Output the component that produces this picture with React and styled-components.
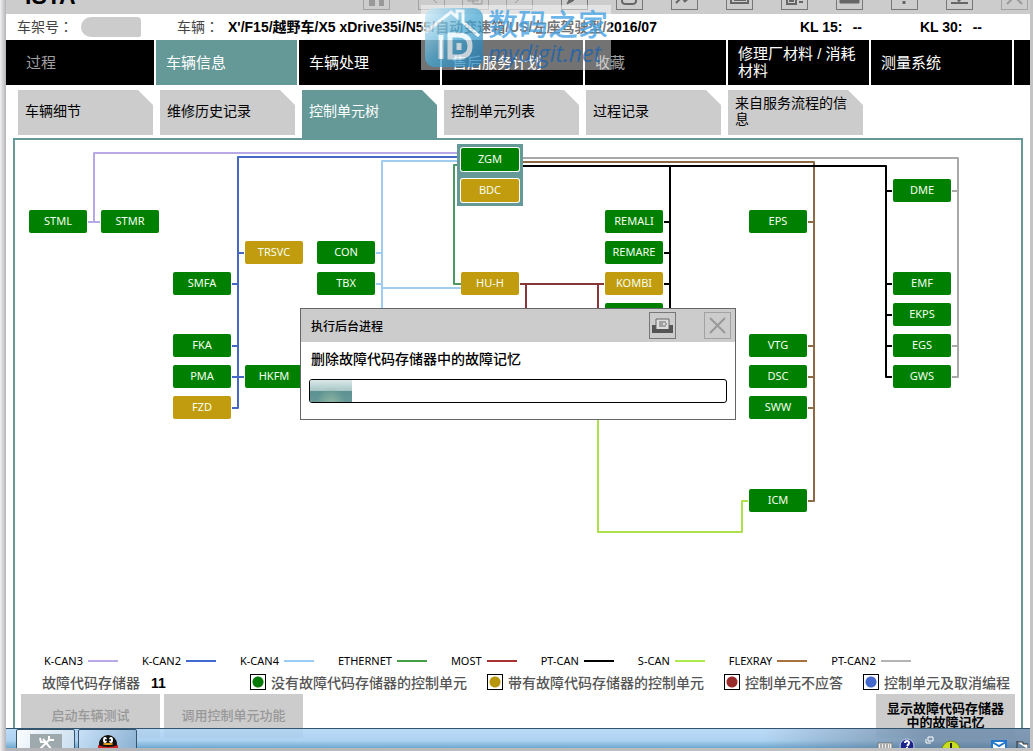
import React from "react";
import styled, { createGlobalStyle } from "styled-components";

const TEAL = "#659998";
const GREEN = "#008000";
const GOLD = "#c19c0e";

const GlobalStyle = createGlobalStyle`
  * {
    box-sizing: border-box;
  }
  body {
    margin: 0;
    background: linear-gradient(90deg, #f0f0f0, #b4b4b8 6px, #c4c4c4);
    font-family: "Liberation Sans", "Noto Sans CJK SC", sans-serif;
  }
  button {
    font-family: inherit;
    border: 0;
    cursor: pointer;
  }
`;

const Frame = styled.div`
  min-height: 100vh;
  display: flex;
  padding: 0 3px 3px 6px;
`;

const Window = styled.main`
  position: relative;
  flex: 1;
  min-width: 0;
  display: flex;
  flex-direction: column;
  background: white;
`;

const TitleBar = styled.header`
  height: 14px;
  padding: 0 2px 4px 19px;
  background: #cccccc;
  display: flex;
  align-items: flex-end;
  gap: 28px;
  overflow: hidden;
`;

const Title = styled.h1`
  margin: 0 auto 0 0;
  font-size: 23px;
  line-height: 20px;
  padding-bottom: 4px;
`;

const ToolGroup = styled.div`
  display: flex;
  gap: 17px;
`;

const IconButton = styled.button`
  width: 27px;
  height: 27px;
  flex: none;
  padding: 0;
  display: flex;
  align-items: center;
  justify-content: center;
  border: 1px solid ${(props) => (props.$faded ? "#a2a2a2" : "#777777")};
  color: ${(props) => (props.$faded ? "#999999" : "#666666")};
  background: transparent;
`;

const InfoRow = styled.section`
  height: 26px;
  padding: 0 48px 0 11px;
  display: flex;
  align-items: center;
  font-size: 14px;
  font-weight: 700;
`;

const InfoLabel = styled.span`
  width: ${(props) => props.$width};
  font-family: "Noto Sans CJK TC", sans-serif;
  font-weight: 400;
  line-height: 20px;
  padding-bottom: 2px;
  color: #444444;
`;

const HiddenNumber = styled.span`
  width: 60px;
  height: 20px;
  margin-right: 36px;
  border-radius: 10px 4px 2px 10px;
  background: #cccccc;
`;

const Vehicle = styled.span`
  flex: 1;
  min-width: 0;
  padding-bottom: 2px;
  white-space: nowrap;
`;

const Terminal = styled.span`
  display: flex;
  justify-content: space-between;
  width: 62px;
  margin-left: 58px;
  white-space: nowrap;
`;

const MainNav = styled.nav`
  display: flex;
  gap: 2px;
  height: 45px;
`;

const MainTab = styled.button`
  flex: 0 0 ${(props) => (props.$first ? "148px" : "141px")};
  padding: 0 10px 1px ${(props) => (props.$first ? "20px" : "10px")};
  background: ${(props) => (props.$active ? TEAL : "black")};
  color: ${(props) => (props.$muted ? "#a0a0a0" : "white")};
  font-size: 15px;
  line-height: 17px;
  text-align: left;
`;

const NavRest = styled.div`
  flex: 1;
  background: black;
`;

const SubNav = styled.nav`
  display: flex;
  align-items: flex-start;
  gap: 7px;
  height: 53px;
  padding: 5px 0 0 12px;
`;

const SubTab = styled.button`
  width: 135px;
  height: ${(props) => (props.$active ? "48px" : "45px")};
  padding: 0 14px ${(props) => (props.$active ? "6px" : "3px")} 7px;
  background: ${(props) => (props.$active ? TEAL : "#cccccc")};
  color: ${(props) => (props.$active ? "white" : "black")};
  clip-path: polygon(0 0, 120px 0, 100% 15px, 100% 100%, 0 100%);
  font-size: 14px;
  line-height: 16px;
  text-align: left;
`;

const Panel = styled.section`
  flex: 1;
  display: flex;
  flex-direction: column;
  margin: 0 7px;
  border: 2px solid ${TEAL};
  border-bottom: 0;
`;

const Tree = styled.div`
  position: relative;
  flex: 1;
  display: grid;
  grid-template-columns: repeat(13, 58px);
  grid-auto-rows: 23px;
  gap: 8px 14px;
  padding: 8px 14px;
`;

const Wires = styled.svg`
  position: absolute;
  left: 0;
  top: 0;
  width: 1006px;
  height: 400px;
  fill: none;
  stroke-width: 2;
`;

const Gateway = styled.div`
  grid-column: 7;
  grid-row: 1 / 3;
  margin: -4px;
  background: ${TEAL};
  z-index: 1;
`;

const Unit = styled.button`
  grid-column: ${(props) => props.$col};
  grid-row: ${(props) => props.$row};
  z-index: 1;
  padding: 0 0 2px;
  border-radius: 2px;
  background: ${(props) => (props.$fault ? GOLD : GREEN)};
  box-shadow: ${(props) => (props.$outlined ? "0 0 0 1px white" : "none")};
  color: #f4fff0;
  font-family: "Noto Sans", sans-serif;
  font-size: 11px;
  line-height: 20px;
`;

const BusLegend = styled.div`
  display: flex;
  gap: 24px;
  height: 18px;
  padding-left: 29px;
  font-family: "Noto Sans", sans-serif;
  font-size: 11px;
  line-height: 18px;
`;

const Bus = styled.span`
  display: flex;
  align-items: center;
  gap: 5px;
  white-space: nowrap;
  &::after {
    content: "";
    width: 30px;
    height: 2px;
    background: ${(props) => props.$color};
  }
`;

const StatusLegend = styled.div`
  display: flex;
  align-items: center;
  gap: 20px;
  height: 24px;
  padding: 0 11px 0 27px;
  font-size: 14px;
  font-weight: 500;
  color: #555555;
  white-space: nowrap;
`;

const FaultCount = styled.span`
  margin-right: auto;
  strong {
    margin-left: 11px;
    color: black;
  }
`;

const Status = styled.span`
  display: flex;
  align-items: center;
  gap: 5px;
`;

const Dot = styled.i`
  width: 16px;
  height: 16px;
  border: 1px solid black;
  background: radial-gradient(circle, ${(props) => props.$color} 5px, white 6px);
`;

const Actions = styled.div`
  display: flex;
  gap: 4px;
  height: 34px;
  padding: 0 6px;
`;

const ActionButton = styled.button`
  width: 139px;
  height: 44px;
  padding: 0 8px;
  background: #cccccc;
  color: ${(props) => (props.disabled ? "#989898" : "black")};
  font-size: 13px;
  font-weight: ${(props) => (props.disabled ? 500 : 700)};
  line-height: 14px;
  &:last-child {
    margin-left: auto;
  }
`;

const Dialog = styled.section`
  position: absolute;
  z-index: 3;
  left: 50%;
  top: 308px;
  width: 436px;
  height: 112px;
  transform: translateX(-50%);
  border: 1px solid #666666;
  background: white;
`;

const DialogHeader = styled.header`
  display: flex;
  align-items: center;
  gap: 28px;
  height: 33px;
  padding: 0 4px 0 10px;
  background: #cccccc;
  h2 {
    flex: 1;
    margin: 0;
    font-size: 12px;
    font-weight: 500;
  }
`;

const DialogBody = styled.div`
  padding: 5px 8px;
  p {
    margin: 0 0 8px 2px;
    font-size: 14px;
    font-weight: 500;
    line-height: 24px;
  }
`;

const Progress = styled.div`
  height: 24px;
  border: 1px solid black;
  border-radius: 3px;
  overflow: hidden;
  &::before {
    content: "";
    display: block;
    width: ${(props) => props.$value}%;
    height: 100%;
    background: radial-gradient(ellipse at 50% 110%, #8fb5a0, transparent 50%),
      linear-gradient(#d8e8e8, #a8c6c6 50%, #5c9292 52%, #659998);
  }
`;

const Watermark = styled.div`
  position: absolute;
  z-index: 2;
  left: 415px;
  top: 5px;
  width: 190px;
  height: 65px;
  display: flex;
  gap: 4px;
  padding: 2px 3px;
  background: rgba(255, 255, 255, 0.45);
  pointer-events: none;
  white-space: nowrap;
`;

const WatermarkText = styled.div`
  opacity: 0.8;
  font-size: 30px;
  font-weight: 500;
  line-height: 36px;
  color: #48a4e4;
  em {
    display: block;
    font-family: "Open Sans", sans-serif;
    font-size: 23px;
    line-height: 20px;
    color: #1c64b0;
  }
`;

const Taskbar = styled.footer`
  position: relative;
  z-index: 2;
  height: 20px;
  display: flex;
  gap: 3px;
  padding: 0 2px 0 10px;
  border-top: 1px solid #31546f;
  background: linear-gradient(90deg, transparent 74%, rgba(90, 110, 135, 0.6) 90%),
    linear-gradient(rgba(176, 212, 248, 0.85), rgba(164, 206, 238, 0.9) 60%, #6fa8d0);
  overflow: hidden;
`;

const TaskButton = styled.button`
  width: 59px;
  height: 30px;
  padding: 0;
  border: 1px solid #38536c;
  border-radius: 2px;
  background: ${(props) =>
    props.$active
      ? "linear-gradient(120deg, #fafdff, #c6dcee)"
      : "linear-gradient(120deg, #c8e0f6, #86aed0)"};
  svg {
    display: block;
    margin: 3px auto 0;
  }
`;

const Tray = styled.svg`
  margin-left: auto;
  flex: none;
`;

const toolIcons = {
  back: <path d="M16 3L8 10l8 7" />,
  copy: <path d="M3 2h10v13H3zM8 7h9v11H8z" />,
  forward: <path d="M6 17l8-7-4-5" />,
  edit: <path d="M3 18l3-6L16 2l3 3-10 10z" fill="currentColor" />,
  refresh: <path d="M3 12v3q0 3 4 3h6q4 0 4-3v-3M5 12h11" strokeWidth="2" />,
  tool: <path d="M2 17l6-6 2 3 3-3m-1-3a4 4 0 1 1 3 4l-5 4" strokeWidth="2" />,
  box: <path d="M2 11v6h17v-6M6 10v4h10v-4" strokeWidth="2" />,
  device: <path d="M3 3h9v15H3zM6 7h3v8H6zM15 16h4" strokeWidth="2" />,
  keyboard: <path d="M1 8h19v9H1z" fill="currentColor" />,
  help: <path d="M10 3v9M10 15v3" strokeWidth="3" />,
  download: <path d="M1 11h19M2 17h17M10 3v11M6 10l4 5 4-5" strokeWidth="2" />,
  close: <path d="M3 3l15 15M18 3L3 18" strokeWidth="2" />,
};

const rightTools = ["edit", "refresh", "tool", "box", "device", "keyboard", "help", "download"];

const mainTabs = [
  { label: "过程", first: true, muted: true },
  { label: "车辆信息", active: true },
  { label: "车辆处理" },
  { label: "售后服务计划" },
  { label: "收藏", muted: true },
  { label: "修理厂材料 / 消耗材料" },
  { label: "测量系统" },
];

const subTabs = ["车辆细节", "维修历史记录", "控制单元树", "控制单元列表", "过程记录", "来自服务流程的信息"];

// [label, column, row, has stored faults]
const units = [
  ["ZGM", 7, 1],
  ["BDC", 7, 2, true],
  ["DME", 13, 2],
  ["STML", 1, 3],
  ["STMR", 2, 3],
  ["REMALI", 9, 3],
  ["EPS", 11, 3],
  ["TRSVC", 4, 4, true],
  ["CON", 5, 4],
  ["REMARE", 9, 4],
  ["SMFA", 3, 5],
  ["TBX", 5, 5],
  ["HU-H", 7, 5, true],
  ["KOMBI", 9, 5, true],
  ["EMF", 13, 5],
  ["", 9, 6],
  ["EKPS", 13, 6],
  ["FKA", 3, 7],
  ["VTG", 11, 7],
  ["EGS", 13, 7],
  ["PMA", 3, 8],
  ["HKFM", 4, 8],
  ["DSC", 11, 8],
  ["GWS", 13, 8],
  ["FZD", 3, 9, true],
  ["SWW", 11, 9],
  ["ICM", 11, 12],
];

const wires = [
  ["#b8a8e4", "M442 13H79V82M73 82H85"],
  ["#4468c4", "M442 17H223V268H217M223 113h6M223 144h-6M223 206h-6M217 237h12"],
  ["#a0ccf0", "M442 21H367V180M367 113h-6M367 144h-6M367 148H446"],
  ["#4c9860", "M442 25H439V144H446"],
  ["#a8a8a8", "M508 18H943V237H937M943 51h-6M943 206h-6"],
  ["#8b6a45", "M508 22H799V361H793M799 82h-6M799 206h-6M799 237h-6M799 268h-6"],
  [
    "black",
    "M508 26H871V237H877M871 51h6M871 144h6M871 175h6M871 206h6M655 26V180M655 82h-6M655 113h-6M655 144h-6",
  ],
  ["#853636", "M505 144H589M511 144V180M583 144V180"],
  ["#aedf4c", "M583 270V392H727V361H733"],
];

const buses = [
  ["K-CAN3", "#b8a8e4"],
  ["K-CAN2", "#4169d1"],
  ["K-CAN4", "#99cdf5"],
  ["ETHERNET", "#43a047"],
  ["MOST", "#a83232"],
  ["PT-CAN", "black"],
  ["S-CAN", "#aee84a"],
  ["FLEXRAY", "#a9713b"],
  ["PT-CAN2", "#b4b4b4"],
];

const statuses = [
  ["没有故障代码存储器的控制单元", "#087808"],
  ["带有故障代码存储器的控制单元", "#b8960c"],
  ["控制单元不应答", "#982c2c"],
  ["控制单元及取消编程", "#4468cc"],
];

const ToolButton = ({ name, faded }) => (
  <IconButton $faded={faded} aria-label={name}>
    <svg width="21" height="21" fill="none" stroke="currentColor">
      {toolIcons[name]}
    </svg>
  </IconButton>
);

const Toolbar = () => (
  <TitleBar>
    <Title>ISTA</Title>
    <IconButton $faded aria-label="home">
      <svg width="21" height="21" fill="currentColor">
        <path d="M3 5l7-4 8 4v15h-5v-7H9v7H3z" />
      </svg>
    </IconButton>
    <ToolGroup>
      <ToolButton name="back" faded />
      <ToolButton name="copy" faded />
      <ToolButton name="forward" faded />
    </ToolGroup>
    {rightTools.map((name) => (
      <ToolButton key={name} name={name} />
    ))}
    <ToolButton name="close" faded />
  </TitleBar>
);

const ControlUnitTree = () => (
  <Tree>
    <Wires>
      {wires.map(([color, d]) => (
        <path key={color} stroke={color} strokeLinejoin="round" d={d} />
      ))}
    </Wires>
    <Gateway />
    {units.map(([label, col, row, fault]) => (
      <Unit key={label} $col={col} $row={row} $fault={fault} $outlined={col === 7 && row < 3}>
        {label}
      </Unit>
    ))}
  </Tree>
);

const ProgressDialog = () => (
  <Dialog role="dialog" aria-labelledby="dialog-title">
    <DialogHeader>
      <h2 id="dialog-title">执行后台进程</h2>
      <IconButton aria-label="print">
        <svg width="23" height="21">
          <path d="M1 10h4v4h13v-4h4v8H1z" fill="#555" />
          <path d="M5 14V4h13v10" fill="#ddd" stroke="#666" />
          <path d="M8 7h7M8 9h4M8 11h7M14 9h2" stroke="#666" />
        </svg>
      </IconButton>
      <ToolButton name="close" faded />
    </DialogHeader>
    <DialogBody>
      <p>删除故障代码存储器中的故障记忆</p>
      <Progress role="progressbar" aria-valuenow={10} aria-label="执行后台进程" $value={10} />
    </DialogBody>
  </Dialog>
);

const SiteMark = () => (
  <Watermark>
    <svg width="60" height="61" opacity="0.72">
      <defs>
        <linearGradient id="mark" x2="1" y2="1">
          <stop offset="0" stopColor="#d4eefa" />
          <stop offset="0.5" stopColor="#46a8d4" />
          <stop offset="1" stopColor="#1878b4" />
        </linearGradient>
      </defs>
      <rect x="1" y="1" width="58" height="59" rx="9" fill="url(#mark)" />
      <path d="M2 25L27 5l6 5V4h6v11l16 14" fill="none" stroke="#eefaff" strokeWidth="3" />
      <path
        d="M17 28v24M26 50V28h8q12 0 12 11t-12 11zM35 36v7"
        fill="none"
        stroke="#e8f6ff"
        strokeWidth="5"
      />
    </svg>
    <WatermarkText>
      数码之家
      <em>mydigit.net</em>
    </WatermarkText>
  </Watermark>
);

const SystemTaskbar = () => (
  <Taskbar>
    <TaskButton $active aria-label="ISTA">
      <svg width="32" height="24">
        <rect width="32" height="24" fill="#9da9ac" />
        <path d="M13 5l9 11M10 15l9-9" stroke="white" strokeWidth="2" />
        <path d="M10 4l1 4h4M19 2v4h5" fill="none" stroke="white" strokeWidth="2" />
      </svg>
    </TaskButton>
    <TaskButton aria-label="QQ">
      <svg width="24" height="24">
        <path d="M3 20V10a9 9 0 0 1 18 0v10z" fill="#111" />
        <ellipse cx="9" cy="6" rx="2" ry="3" fill="white" />
        <ellipse cx="15" cy="6" rx="2" ry="3" fill="white" />
        <circle cx="10" cy="6" r="1" />
        <circle cx="14" cy="6" r="1" />
        <ellipse cx="12" cy="10" rx="5" ry="1" fill="#f4a71c" />
        <path d="M2 11q10 4 20 0v8H2z" fill="#d02424" />
      </svg>
    </TaskButton>
    <Tray width="152" height="19">
      <path d="M2 14h14v6H2z" fill="#eee" stroke="#777" />
      <path d="M4 16h10M4 18h10" stroke="#666" strokeDasharray="2 1" />
      <circle cx="31" cy="17" r="7" fill="#1c2488" stroke="#c8d0ee" />
      <path
        d="M29 14q0-2 2-2t2 2q0 1-2 3M31 18v1"
        fill="none"
        stroke="white"
        strokeWidth="2"
      />
      <path d="M52 8h5v4h-5zM50 10v4h5" fill="none" stroke="white" />
      <circle cx="75" cy="21" r="9" fill="#c8dc20" stroke="#6c8c18" />
      <path d="M75 14v6" stroke="#222" strokeWidth="2" />
      <path d="M116 12h14v8h-14z" fill="white" stroke="#2478cc" strokeWidth="2" />
      <path d="M116 13l7 4 7-4" fill="none" stroke="#2478cc" strokeWidth="2" />
      <path d="M141 12v8M141 13h6v2h5v5" fill="white" stroke="#333" />
    </Tray>
  </Taskbar>
);

const App = () => (
  <>
    <GlobalStyle />
    <Frame>
      <Window>
        <Toolbar />
        <InfoRow>
          <InfoLabel $width="64px">车架号：</InfoLabel>
          <HiddenNumber />
          <InfoLabel $width="51px">车辆：</InfoLabel>
          <Vehicle>X'/F15/越野车/X5 xDrive35i/N55/自动变速箱/US/左座驾驶型/2016/07</Vehicle>
          <Terminal>
            <span>KL 15:</span>
            <span>--</span>
          </Terminal>
          <Terminal>
            <span>KL 30:</span>
            <span>--</span>
          </Terminal>
        </InfoRow>
        <MainNav>
          {mainTabs.map((tab) => (
            <MainTab key={tab.label} $first={tab.first} $active={tab.active} $muted={tab.muted}>
              {tab.label}
            </MainTab>
          ))}
          <NavRest />
        </MainNav>
        <SubNav>
          {subTabs.map((label) => (
            <SubTab key={label} $active={label === "控制单元树"}>
              {label}
            </SubTab>
          ))}
        </SubNav>
        <Panel>
          <ControlUnitTree />
          <BusLegend>
            {buses.map(([name, color]) => (
              <Bus key={name} $color={color}>
                {name}
              </Bus>
            ))}
          </BusLegend>
          <StatusLegend>
            <FaultCount>
              故障代码存储器<strong>11</strong>
            </FaultCount>
            {statuses.map(([label, color]) => (
              <Status key={label}>
                <Dot $color={color} />
                {label}
              </Status>
            ))}
          </StatusLegend>
          <Actions>
            <ActionButton disabled>启动车辆测试</ActionButton>
            <ActionButton disabled>调用控制单元功能</ActionButton>
            <ActionButton>显示故障代码存储器中的故障记忆</ActionButton>
          </Actions>
        </Panel>
        <SystemTaskbar />
        <ProgressDialog />
        <SiteMark />
      </Window>
    </Frame>
  </>
);

export default App;
